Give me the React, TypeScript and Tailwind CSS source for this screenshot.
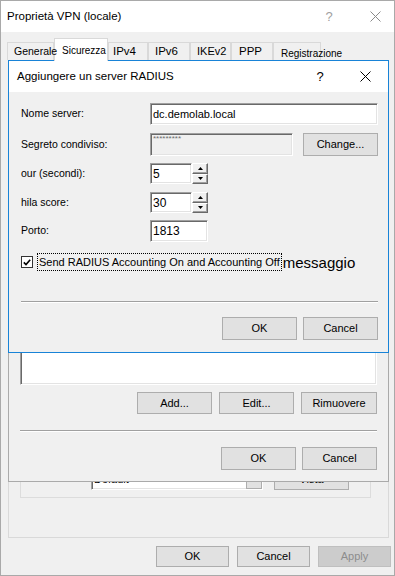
import React from "react";

function XIcon({ color = "#000" }: { color?: string }) {
  return (
    <svg width="11" height="11" viewBox="0 0 11 11">
      <path d="M0.5 0.5 L10.5 10.5 M10.5 0.5 L0.5 10.5" stroke={color} strokeWidth="1" />
    </svg>
  );
}

const sunken =
  "border border-t-[#a0a0a0] border-l-[#a0a0a0] border-b-white border-r-white shadow-[inset_1px_1px_0_#696969,inset_-1px_-1px_0_#e3e3e3]";

function Btn({ children, className = "", disabled = false }: { children: React.ReactNode; className?: string; disabled?: boolean }) {
  return (
    <div
      className={`flex items-center justify-center border text-[11px] ${
        disabled ? "border-[#bfbfbf] bg-[#cccccc] text-[#8c8c8c]" : "border-[#adadad] bg-[#e1e1e1] text-black"
      } ${className}`}
    >
      {children}
    </div>
  );
}

function Arrow({ up }: { up?: boolean }) {
  return (
    <div className="flex flex-1 items-center justify-center border border-t-white border-l-white border-b-[#696969] border-r-[#696969] bg-[#f0f0f0] shadow-[inset_-1px_-1px_0_#a0a0a0]">
      <svg width="5" height="3" viewBox="0 0 5 3">
        <path d={up ? "M2.5 0 L5 3 L0 3 Z" : "M0 0 L5 0 L2.5 3 Z"} fill="#000" />
      </svg>
    </div>
  );
}

function Spin({ value }: { value: string }) {
  return (
    <div className="flex h-[21px] w-[58px]">
      <div className={`${sunken} flex w-[42px] items-center bg-white pl-[2px] text-[12px]`}>{value}</div>
      <div className="flex w-[16px] flex-col">
        <Arrow up />
        <Arrow />
      </div>
    </div>
  );
}

function Row({ label, children, className = "" }: { label: string; children: React.ReactNode; className?: string }) {
  return (
    <div className={`flex items-center ${className}`}>
      <span className="w-[129px] text-[10.5px]">{label}</span>
      <div className="flex flex-1 items-center">{children}</div>
    </div>
  );
}

const tabs = [
  { name: "Generale", w: "w-[47px]", cls: "relative z-20 pl-[6px] text-[10.5px]" },
  { name: "Sicurezza", w: "w-[54px]", cls: "pl-[7px] text-[10px]", active: true },
  { name: "IPv4", w: "w-[40px]", cls: "pl-[4px] text-[11.5px]" },
  { name: "IPv6", w: "w-[42px]", cls: "pl-[6px] text-[11.5px]" },
  { name: "IKEv2", w: "w-[41px]", cls: "pl-[6px] text-[11px]" },
  { name: "PPP", w: "w-[42px]", cls: "pl-[7px] text-[11.5px]" },
  { name: "Registrazione", w: "w-[48px]", cls: "pl-[7px] pt-[3px] text-[10px]" },
];

export default function App() {
  return (
    <div className="relative flex h-[576px] w-[395px] flex-col overflow-hidden border border-[#a9a9a9] bg-[#f0f0f0] font-['Liberation_Sans',Arial,sans-serif] text-black">
      {/* outer title bar */}
      <div className="flex h-[31px] items-center bg-white">
        <span className="flex-1 pl-[6px] text-[11.5px]">Proprietà VPN (locale)</span>
        <span className="w-[54px] text-center text-[13px] text-[#a0a0a0]">?</span>
        <span className="flex w-[38px] justify-center">
          <XIcon color="#8a8a8a" />
        </span>
      </div>

      {/* tabs */}
      <div className="flex h-[28px] items-end pl-[6px]">
        {tabs.map((t) =>
          t.active ? (
            <div
              key={t.name}
              className={`relative z-10 -mb-[1px] flex h-[23px] ${t.w} items-center whitespace-nowrap border border-b-0 border-[#d9d9d9] bg-white ${t.cls}`}
            >
              {t.name}
            </div>
          ) : (
            <div
              key={t.name}
              className={`flex h-[18px] ${t.w} items-center whitespace-nowrap border border-b-0 border-[#d9d9d9] bg-[#f0f0f0] ${t.cls}`}
            >
              {t.name}
            </div>
          )
        )}
      </div>

      {/* tab page */}
      <div className="ml-[7px] flex h-[478px] w-[381px] flex-col justify-end border border-[#d9d9d9] bg-[#f0f0f0] pb-[39px]">
        <div className="ml-[11px] flex h-[60px] w-[351px] items-end border border-[#dcdcdc] pb-[7px]">
          <span className="mb-[8px] ml-[9px] w-[61px] text-[11px]">Certificato:</span>
          <div className={`${sunken} flex h-[21px] w-[172px] items-center bg-white`}>
            <span className="flex-1 pl-[2px] text-[11px]">Default</span>
            <div className="flex h-full w-[16px] items-center justify-center border border-[#adadad] bg-[#e1e1e1]">
              <svg width="5" height="3" viewBox="0 0 5 3">
                <path d="M0 0 L5 0 L2.5 3 Z" fill="#000" />
              </svg>
            </div>
          </div>
          <Btn className="ml-[11px] h-[22px] w-[75px] text-[#cfcfcf]">Vista</Btn>
        </div>
      </div>

      {/* outer buttons */}
      <div className="mt-[8px] flex h-[21px] justify-end gap-[8px] pr-[3px]">
        <Btn className="w-[73px]">OK</Btn>
        <Btn className="w-[73px]">Cancel</Btn>
        <Btn className="w-[73px]" disabled>
          Apply
        </Btn>
      </div>

      {/* middle dialog (inactive) */}
      <div className="absolute left-[7px] top-[69px] flex h-[412px] w-[381px] flex-col justify-end border border-[#aaaaaa] bg-[#f0f0f0] px-[11px] pb-[11px]">
        <div className={`${sunken} h-[120px] bg-white`} />
        <div className="mt-[7px] flex h-[22px] justify-end gap-[7px]">
          <Btn className="w-[75px]">Add...</Btn>
          <Btn className="w-[75px]">Edit...</Btn>
          <Btn className="w-[76px]">Rimuovere</Btn>
        </div>
        <div className="mt-[16px] h-[2px] border-t border-b border-t-[#a0a0a0] border-b-white" />
        <div className="mt-[15px] flex h-[23px] justify-end gap-[6px]">
          <Btn className="w-[75px]">OK</Btn>
          <Btn className="w-[75px]">Cancel</Btn>
        </div>
      </div>

      {/* RADIUS dialog (active) */}
      <div className="absolute left-[7px] top-[59px] flex h-[293px] w-[381px] flex-col border border-[#1883d7] bg-[#f0f0f0]">
        <div className="flex h-[31px] items-center bg-white">
          <span className="flex-1 pl-[8px] text-[11.5px]">Aggiungere un server RADIUS</span>
          <span className="w-[44px] text-center text-[13px]">?</span>
          <span className="flex w-[46px] justify-center">
            <XIcon />
          </span>
        </div>
        <div className="flex flex-1 flex-col pl-[12px] pr-[10px] pt-[11px]">
          <Row label="Nome server:" className="h-[22px]">
            <div className={`${sunken} flex h-[22px] w-full items-center bg-white pl-[2px] text-[11px]`}>dc.demolab.local</div>
          </Row>
          <Row label="Segreto condiviso:" className="mt-[8px] h-[23px]">
            <div className={`${sunken} h-[23px] w-[143px] bg-[#f0f0f0] pl-[2px] text-[8px] leading-[10px] text-[#6d6d6d]`}>*********</div>
            <Btn className="ml-auto h-[23px] w-[75px]">Change...</Btn>
          </Row>
          <Row label="our (secondi):" className="mt-[7px] h-[21px]">
            <Spin value="5" />
          </Row>
          <Row label="hila score:" className="mt-[8px] h-[21px]">
            <Spin value="30" />
          </Row>
          <Row label="Porto:" className="mt-[7px] h-[22px]">
            <div className={`${sunken} flex h-[22px] w-[58px] items-center bg-white pl-[2px] text-[12px]`}>1813</div>
          </Row>
          <div className="mt-[11px] flex h-[18px] items-center">
            <div className="flex h-[12px] w-[12px] items-center justify-center border border-[#333333] bg-white">
              <svg width="8" height="7" viewBox="0 0 8 7">
                <path d="M0.8 3.4 L3 5.6 L7.2 0.8" stroke="#000" strokeWidth="1.6" fill="none" />
              </svg>
            </div>
            <span className="ml-[4px] flex h-[18px] items-center whitespace-nowrap border border-dotted border-black px-[1px] text-[11px]">
              Send RADIUS Accounting On and Accounting Off
            </span>
            <span className="ml-[1px] mt-[3px] whitespace-nowrap text-[15px]">messaggio</span>
          </div>
          <div className="mt-[30px] h-[2px] border-t border-b border-t-[#a0a0a0] border-b-white" />
          <div className="mt-[14px] flex h-[23px] justify-end gap-[6px]">
            <Btn className="w-[75px]">OK</Btn>
            <Btn className="w-[75px]">Cancel</Btn>
          </div>
        </div>
      </div>
    </div>
  );
}
